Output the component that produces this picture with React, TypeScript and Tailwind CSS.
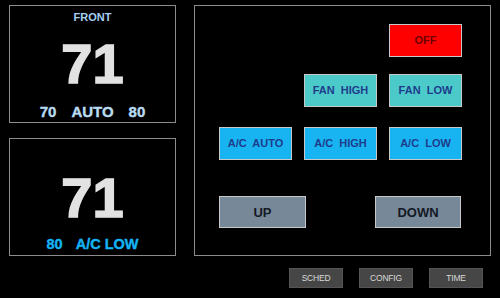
const FONT = { fontFamily: '"Liberation Sans", Arial, sans-serif' }

const TOP_ROWS = [
  [null, null, { label: 'OFF', cls: 'bg-[#ff0000] text-[#6e0000]' }],
  [null, { label: 'FAN  HIGH', cls: 'bg-[#4ccaca] text-[#1e3c8c]' }, { label: 'FAN  LOW', cls: 'bg-[#4ccaca] text-[#1e3c8c]' }],
  [
    { label: 'A/C  AUTO', cls: 'bg-[#18b4f2] text-[#1e3c8c]' },
    { label: 'A/C  HIGH', cls: 'bg-[#18b4f2] text-[#1e3c8c]' },
    { label: 'A/C  LOW', cls: 'bg-[#18b4f2] text-[#1e3c8c]' },
  ],
]

function Key({ label, cls }: { label: string; cls: string }) {
  return (
    <div
      className={`flex h-[33px] w-[73px] items-center justify-center whitespace-pre border border-[#c8c8c8] text-[11px] font-bold leading-none ${cls}`}
    >
      {label}
    </div>
  )
}

function SmallKey({ label }: { label: string }) {
  return (
    <div className="flex h-[20px] w-[54px] items-center justify-center border border-[#555] bg-[#464646] text-[8.5px] leading-none tracking-tight text-[#d8d8d8]">
      {label}
    </div>
  )
}

export default function App() {
  return (
    <div className="h-[298px] w-[500px] overflow-hidden bg-black" style={FONT}>
      <div className="flex pl-[9px] pt-[5px]">
        <div className="flex w-[167px] flex-col gap-[15px]">
          <div className="flex h-[118px] flex-col items-center border border-[#8c8c8c] pt-[6px]">
            <div className="text-[11px] font-bold leading-none text-[#a6cff0]">FRONT</div>
            <div className="mt-[13px] text-[56px] font-bold leading-none text-[#e2e2e2] [-webkit-text-stroke:1.6px_#e2e2e2]">
              71
            </div>
            <div className="mt-[12px] flex gap-[15px] text-[15px] font-bold leading-none text-[#b8dbf2] [-webkit-text-stroke:0.4px_#b8dbf2]">
              <span>70</span>
              <span>AUTO</span>
              <span>80</span>
            </div>
          </div>
          <div className="flex h-[118px] flex-col items-center border border-[#8c8c8c] pt-[31px]">
            <div className="text-[56px] font-bold leading-none text-[#e2e2e2] [-webkit-text-stroke:1.6px_#e2e2e2]">71</div>
            <div className="mt-[11px] flex gap-[13px] text-[14.5px] font-bold leading-none text-[#14b4f4] [-webkit-text-stroke:0.4px_#14b4f4]">
              <span>80</span>
              <span>A/C LOW</span>
            </div>
          </div>
        </div>

        <div className="ml-[18px] flex h-[251px] w-[297px] flex-col border border-[#8c8c8c] pl-[24px] pt-[18px]">
          <div className="grid grid-cols-[73px_73px_73px] gap-x-[12px]">
            {TOP_ROWS.map((row, r) =>
              row.map((k, c) => (
                <div key={`${r}-${c}`} className={r === 1 ? 'mt-[17px]' : r === 2 ? 'mt-[20px]' : ''}>
                  {k ? <Key label={k.label} cls={k.cls} /> : <div className="h-[33px]" />}
                </div>
              )),
            )}
          </div>
          <div className="mt-[36px] flex w-[242px] justify-between">
            <div className="flex h-[32px] w-[87px] items-center justify-center border border-[#c8c8c8] bg-[#778899] text-[13px] font-bold leading-none text-[#141a24]">
              UP
            </div>
            <div className="flex h-[32px] w-[86px] items-center justify-center border border-[#c8c8c8] bg-[#778899] text-[13px] font-bold leading-none text-[#141a24]">
              DOWN
            </div>
          </div>
        </div>
      </div>

      <div className="mt-[12px] flex justify-end gap-[16px] pr-[17px]">
        <SmallKey label="SCHED" />
        <SmallKey label="CONFIG" />
        <SmallKey label="TIME" />
      </div>
    </div>
  )
}
